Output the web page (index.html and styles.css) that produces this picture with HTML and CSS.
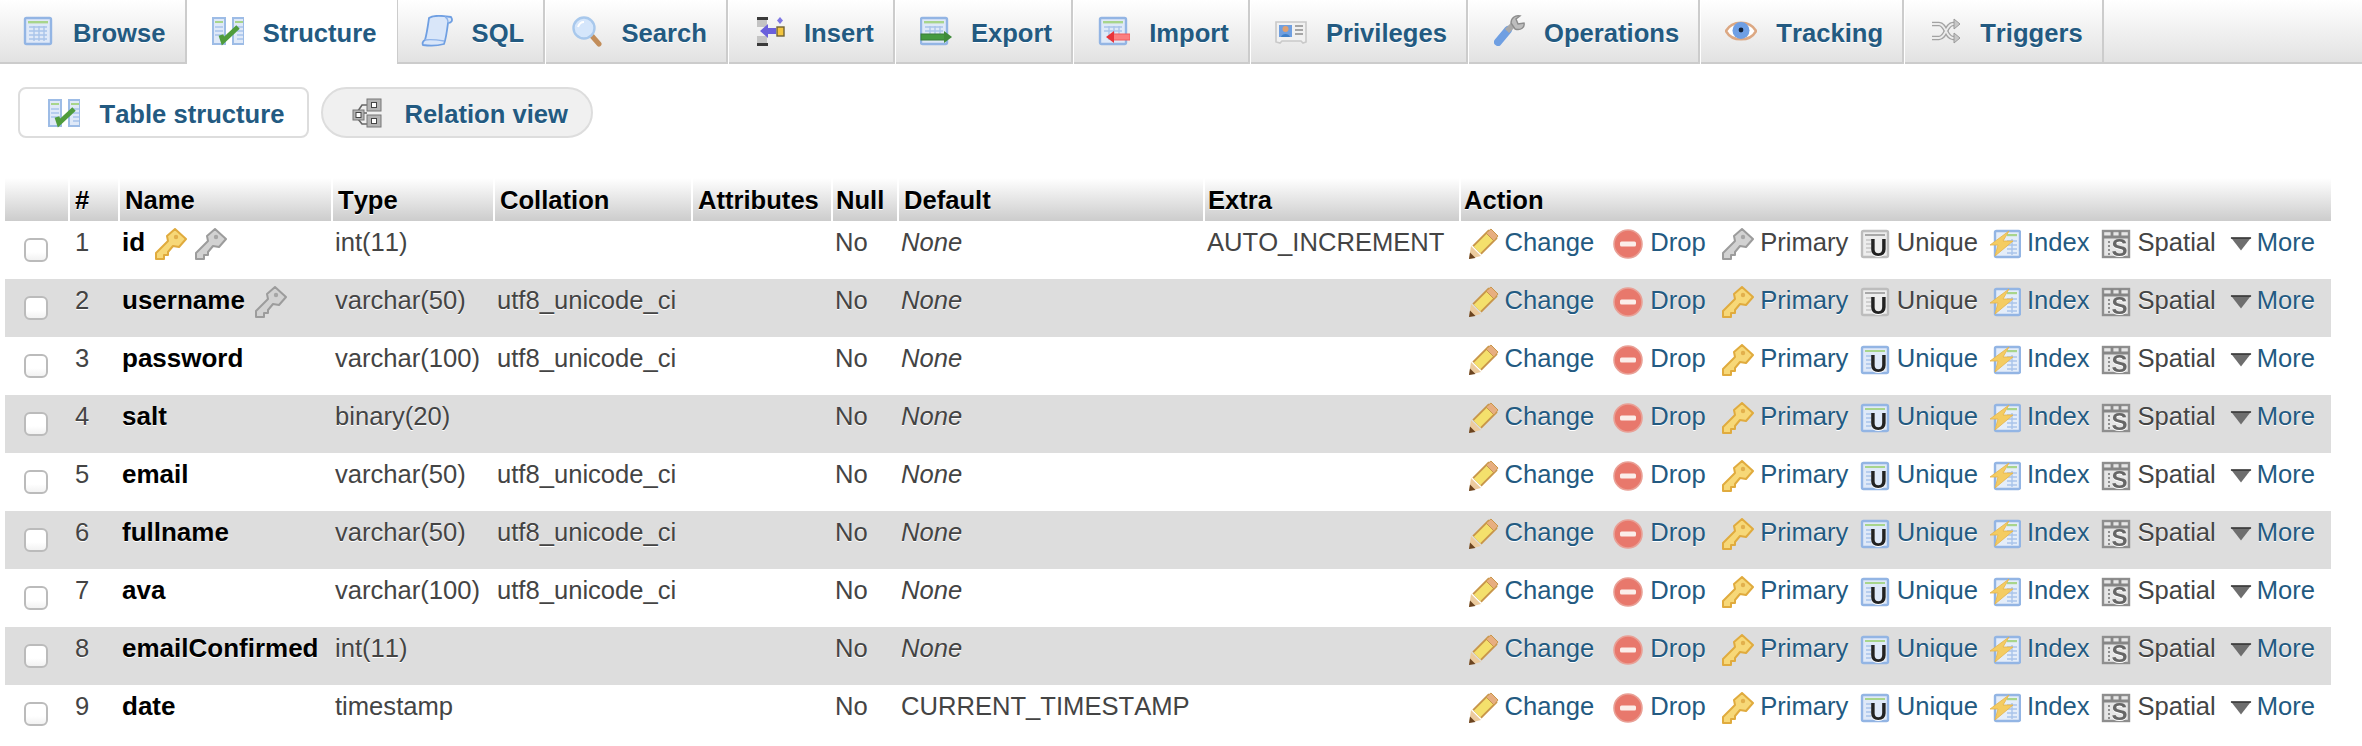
FILE: index.html
```html
<!DOCTYPE html>
<html lang="en">
<head>
    <meta charset="UTF-8">
    <title>phpMyAdmin - Table structure</title>
    <link rel="stylesheet" href="styles.css">
</head>
<body>
    <!-- icon sprite -->
    <svg class="sprite" xmlns="http://www.w3.org/2000/svg">
        <symbol id="i-browse" viewBox="0 0 32 32">
            <rect x="3" y="3" width="26" height="26" rx="1.5" fill="#dfe9f8" stroke="#93b5e4" stroke-width="2.4"/>
            <rect x="6" y="6" width="20" height="2.4" fill="#a8d58c"/>
            <path d="M7 12h18M7 16h18M7 20h18M7 24h18M12 11v15M17 11v15M22 11v15" stroke="#a9c4ea" stroke-width="1.4" fill="none"/>
        </symbol>
        <symbol id="i-structure" viewBox="0 0 32 32">
            <rect x="1" y="3" width="12" height="26" fill="#dfe9f8" stroke="#9dbce6" stroke-width="2"/>
            <rect x="21" y="3" width="11" height="26" fill="#dfe9f8" stroke="#9dbce6" stroke-width="2"/>
            <path d="M3 7h8M23 7h8" stroke="#a8d58c" stroke-width="2"/>
            <path d="M3 12h8M3 16h8M3 20h8M25 12h6M25 16h6M25 20h6M25 24h6" stroke="#a9c4ea" stroke-width="1.4"/>
            <path d="M9 20l2 6L26 12" stroke="#4f9c3c" stroke-width="5" fill="none"/>
        </symbol>
        <symbol id="i-sql" viewBox="0 0 32 32">
            <path d="M8 3C12 0 24 1 30 2C32 5 31 8 27 8C26 16 25 24 23 29C16 31 8 31 2 30C1 28 2 26 4 25C6 18 7 10 8 3Z" fill="#d9e6f9" stroke="#6f9fe2" stroke-width="1.8"/>
            <path d="M24 2c3 1 3 5 3 6M4 25c5-1 13 0 19 1" stroke="#8fb4ea" stroke-width="1.4" fill="none"/>
        </symbol>
        <symbol id="i-search" viewBox="0 0 32 32">
            <path d="M22 21l7 8" stroke="#c28d5a" stroke-width="5" stroke-linecap="round"/>
            <circle cx="14" cy="13" r="10.5" fill="#d5e6fb" stroke="#a8c8ec" stroke-width="2.4"/>
            <path d="M8 12c1-3 3-5 6-5" stroke="#fff" stroke-width="2" fill="none"/>
        </symbol>
        <symbol id="i-insert" viewBox="0 0 32 32">
            <rect x="4" y="5" width="10" height="7" fill="#c4c4c4"/>
            <rect x="4" y="21" width="10" height="7" fill="#c4c4c4"/>
            <rect x="4" y="2" width="11" height="3" fill="#3a3a3a"/>
            <rect x="4" y="28" width="11" height="3" fill="#3a3a3a"/>
            <polygon points="7,16 15,9 15,13 23,13 23,19 15,19 15,23" fill="#6a60dc"/>
            <rect x="24" y="12" width="7" height="9" fill="#f3c53e" stroke="#6f6236" stroke-width="1.4"/>
            <polygon points="27,2 30,5.500 27,9 24,5.500" fill="#7f78e4"/>
        </symbol>
        <symbol id="i-export" viewBox="0 0 32 32">
            <rect x="1" y="3" width="26" height="26" rx="1.5" fill="#dfe9f8" stroke="#93b5e4" stroke-width="2.4"/>
            <rect x="4" y="6" width="20" height="2.4" fill="#a8d58c"/>
            <path d="M5 12h18M5 16h18M10 11v14M15 11v14M20 11v14" stroke="#a9c4ea" stroke-width="1.4"/>
            <rect x="1" y="19" width="24" height="6" fill="#459a40" stroke="#3a7d38"/>
            <polygon points="24,16 32,22 24,28" fill="#3f8b3a"/>
        </symbol>
        <symbol id="i-import" viewBox="0 0 32 32">
            <rect x="2" y="3" width="26" height="26" rx="1.5" fill="#dfe9f8" stroke="#93b5e4" stroke-width="2.4"/>
            <rect x="5" y="6" width="20" height="2.4" fill="#a8d58c"/>
            <path d="M6 12h18M6 16h18M11 11v14M16 11v14M21 11v14" stroke="#a9c4ea" stroke-width="1.4"/>
            <rect x="15" y="19" width="17" height="6" fill="#fb7f80" stroke="#f45c5c"/>
            <polygon points="8,22 16,16 16,28" fill="#e8333a"/>
        </symbol>
        <symbol id="i-privileges" viewBox="0 0 32 32">
            <path d="M1 7h30v20l-3 1-2-2H7l-2 2-4-1Z" fill="#f1f1f1" stroke="#c9c9c9" stroke-width="1.6"/>
            <rect x="4" y="10" width="13" height="12" fill="#6f9fe0"/>
            <circle cx="10.500" cy="14" r="3" fill="#e0a070"/>
            <path d="M6 22c1-4 8-4 9 0Z" fill="#3f7fc8"/>
            <path d="M20 11h8M20 15h8M20 19h8" stroke="#a6a6a6" stroke-width="2"/>
        </symbol>
        <symbol id="i-operations" viewBox="0 0 32 32">
            <path d="M5 27L15 15" stroke="#6f9fe2" stroke-width="8" stroke-linecap="round"/>
            <path d="M14 16l6-6" stroke="#a8a8a8" stroke-width="6"/>
            <path d="M18 8C18 3 22 0 27 1L23 4L25 9L31 8C32 12 28 16 22 14Z" fill="#bdbdbd" stroke="#8c8c8c" stroke-width="1.400"/>
        </symbol>
        <symbol id="i-tracking" viewBox="0 0 32 32">
            <path d="M1 16C7 5 25 5 31 16C25 27 7 27 1 16Z" fill="#fff" stroke="#dca883" stroke-width="2.6"/>
            <circle cx="16" cy="15.500" r="8.500" fill="#6f9fe4"/>
            <circle cx="16" cy="15" r="2.400" fill="#12233c"/>
        </symbol>
        <symbol id="i-triggers" viewBox="0 0 32 32">
            <g fill="none" stroke="#a2a2a2" stroke-width="4.400">
                <path d="M3 9h7c7 0 7 14 14 14h3"/>
                <path d="M3 23h7c7 0 7-14 14-14h3"/>
            </g>
            <g fill="none" stroke="#ececec" stroke-width="1.800">
                <path d="M3 9h7c7 0 7 14 14 14h3"/>
                <path d="M3 23h7c7 0 7-14 14-14h3"/>
            </g>
            <polygon points="25,4 31,9 25,14" fill="#c8c8c8" stroke="#9a9a9a"/>
            <polygon points="25,18 31,23 25,28" fill="#c8c8c8" stroke="#9a9a9a"/>
        </symbol>
        <symbol id="i-relation" viewBox="0 0 32 32">
            <path d="M16 8H11L7 14M7 22L11 27H16M12 16h4" stroke="#666" stroke-width="1.600" fill="none"/>
            <rect x="16" y="2" width="14" height="12" fill="#b4b4b4" stroke="#777"/>
            <rect x="20.500" y="5.500" width="5" height="5" fill="#fff" stroke="#444"/>
            <rect x="2" y="13" width="11" height="10" fill="#b4b4b4" stroke="#777"/>
            <rect x="5" y="15.500" width="5" height="5" fill="#fff" stroke="#444"/>
            <rect x="16" y="18" width="14" height="12" fill="#b4b4b4" stroke="#777"/>
            <rect x="20.500" y="21.500" width="5" height="5" fill="#fff" stroke="#444"/>
        </symbol>
        <symbol id="i-key" viewBox="0 0 32 32">
            <path d="M20 1L31 11L24 19L18 18L13 24V27H9V31H1V25L13 13L12 8Z" fill="#f7d878" stroke="#e0ab3e" stroke-width="2" stroke-linejoin="round"/>
            <circle cx="21" cy="9" r="2.200" fill="#e2b04c"/>
        </symbol>
        <symbol id="i-key-off" viewBox="0 0 32 32">
            <path d="M20 1L31 11L24 19L18 18L13 24V27H9V31H1V25L13 13L12 8Z" fill="#d2d2d2" stroke="#9c9c9c" stroke-width="2" stroke-linejoin="round"/>
            <circle cx="21" cy="9" r="2.200" fill="#a6a6a6"/>
        </symbol>
        <symbol id="i-change" viewBox="0 0 32 32">
            <path d="M10 22L26 6" stroke="#c8964a" stroke-width="13"/>
            <path d="M10 22L26 6" stroke="#f4e06c" stroke-width="9"/>
            <path d="M24 1L31 8L27 13L19 5Z" fill="#e7ae80" stroke="#c8964a"/>
            <polygon points="2,31 4,18 14,28" fill="#eccb9e"/>
            <polygon points="2,31 3,24.500 8.500,30" fill="#6b4420"/>
        </symbol>
        <symbol id="i-drop" viewBox="0 0 32 32">
            <circle cx="16" cy="16" r="14" fill="#e8786c" stroke="#e9a096" stroke-width="1.600"/>
            <rect x="8" y="13.500" width="16" height="5" rx="1.500" fill="#fbeeea"/>
        </symbol>
        <symbol id="i-unique" viewBox="0 0 32 32">
            <rect x="3" y="3" width="26" height="26" rx="1.500" fill="#dfe9f8" stroke="#93b5e4" stroke-width="2.400"/>
            <rect x="6" y="6" width="20" height="2" fill="#a8d58c"/>
            <path d="M7 12h7M7 16h7M7 20h7M7 24h7" stroke="#a9c4ea" stroke-width="1.400"/>
            <text x="19.500" y="27.500" class="ico-letter">U</text>
        </symbol>
        <symbol id="i-unique-off" viewBox="0 0 32 32">
            <rect x="3" y="3" width="26" height="26" rx="1.500" fill="#ededed" stroke="#bdbdbd" stroke-width="2.400"/>
            <rect x="6" y="6" width="20" height="2" fill="#a8a8a8"/>
            <path d="M7 12h7M7 16h7M7 20h7M7 24h7" stroke="#c6c6c6" stroke-width="1.400"/>
            <text x="19.500" y="27.500" class="ico-letter">U</text>
        </symbol>
        <symbol id="i-index" viewBox="0 0 32 32">
            <rect x="6" y="3" width="25" height="26" rx="1.500" fill="#e4edf9" stroke="#93b5e4" stroke-width="2.400"/>
            <rect x="18" y="6" width="10" height="2.200" fill="#a8d58c"/>
            <path d="M18 13h10M18 17h10M18 21h10M18 25h10M23 11v16" stroke="#a9c4ea" stroke-width="1.400"/>
            <polygon points="20,3 1,17 9,17 6,28 24,13 14,13" fill="#f4cc62" stroke="#e6b449" stroke-width=".8"/>
        </symbol>
        <symbol id="i-spatial" viewBox="0 0 32 32">
            <rect x="3" y="3" width="26" height="26" fill="#e6e6e6" stroke="#8e8e8e" stroke-width="2.400"/>
            <path d="M3 9h26M12 3v6M20 3v6" stroke="#868686" stroke-width="2.800"/>
            <path d="M9 13v14" stroke="#8e8e8e" stroke-width="2" stroke-dasharray="2 2"/>
            <text x="19.500" y="27.500" class="ico-letter ico-letter-grey">S</text>
        </symbol>
        <symbol id="i-more" viewBox="0 0 24 32">
            <polygon points="1,9 23,9 12,23" fill="#6e6e6e"/>
            <path d="M1 9.500h22" stroke="#333" stroke-width="1.600"/>
        </symbol>
    </svg>

    <nav class="tabs">
        <a class="tab" href="#"><svg class="icon"><use href="#i-browse"/></svg><span>Browse</span></a>
        <a class="tab active" href="#"><svg class="icon"><use href="#i-structure"/></svg><span>Structure</span></a>
        <a class="tab" href="#"><svg class="icon"><use href="#i-sql"/></svg><span>SQL</span></a>
        <a class="tab" href="#"><svg class="icon"><use href="#i-search"/></svg><span>Search</span></a>
        <a class="tab" href="#"><svg class="icon"><use href="#i-insert"/></svg><span>Insert</span></a>
        <a class="tab" href="#"><svg class="icon"><use href="#i-export"/></svg><span>Export</span></a>
        <a class="tab" href="#"><svg class="icon"><use href="#i-import"/></svg><span>Import</span></a>
        <a class="tab" href="#"><svg class="icon"><use href="#i-privileges"/></svg><span>Privileges</span></a>
        <a class="tab" href="#"><svg class="icon"><use href="#i-operations"/></svg><span>Operations</span></a>
        <a class="tab" href="#"><svg class="icon"><use href="#i-tracking"/></svg><span>Tracking</span></a>
        <a class="tab" href="#"><svg class="icon"><use href="#i-triggers"/></svg><span>Triggers</span></a>
    </nav>

    <div class="subtabs">
        <a class="subtab current" href="#"><svg class="icon"><use href="#i-structure"/></svg><span>Table structure</span></a>
        <a class="subtab pill" href="#"><svg class="icon"><use href="#i-relation"/></svg><span>Relation view</span></a>
    </div>

    <table class="fields">
        <colgroup>
            <col class="c-check"><col class="c-num"><col class="c-name"><col class="c-type"><col class="c-coll">
            <col class="c-attr"><col class="c-null"><col class="c-default"><col class="c-extra"><col class="c-action">
        </colgroup>
        <thead>
            <tr>
                <th></th><th>#</th><th>Name</th><th>Type</th><th>Collation</th><th>Attributes</th><th class="tight">Null</th><th>Default</th><th class="tight">Extra</th><th class="tight">Action</th>
            </tr>
        </thead>
        <tbody>
            <tr>
                <td><input class="check" type="checkbox"></td>
                <td class="num">1</td>
                <td><div class="name"><b>id</b><svg class="icon"><use href="#i-key"/></svg><svg class="icon"><use href="#i-key-off"/></svg></div></td>
                <td>int(11)</td><td></td><td></td><td>No</td><td><i>None</i></td><td>AUTO_INCREMENT</td>
                <td><div class="actions">
                    <a class="act change" href="#"><svg class="icon"><use href="#i-change"/></svg>Change</a>
                    <a class="act drop" href="#"><svg class="icon"><use href="#i-drop"/></svg>Drop</a>
                    <span class="act primary"><svg class="icon"><use href="#i-key-off"/></svg>Primary</span>
                    <span class="act unique"><svg class="icon"><use href="#i-unique-off"/></svg>Unique</span>
                    <a class="act index" href="#"><svg class="icon"><use href="#i-index"/></svg>Index</a>
                    <span class="act spatial"><svg class="icon"><use href="#i-spatial"/></svg>Spatial</span>
                    <a class="act more" href="#"><svg class="icon tri"><use href="#i-more"/></svg>More</a>
                </div></td>
            </tr>
            <tr>
                <td><input class="check" type="checkbox"></td>
                <td class="num">2</td>
                <td><div class="name"><b>username</b><svg class="icon"><use href="#i-key-off"/></svg></div></td>
                <td>varchar(50)</td><td>utf8_unicode_ci</td><td></td><td>No</td><td><i>None</i></td><td></td>
                <td><div class="actions">
                    <a class="act change" href="#"><svg class="icon"><use href="#i-change"/></svg>Change</a>
                    <a class="act drop" href="#"><svg class="icon"><use href="#i-drop"/></svg>Drop</a>
                    <a class="act primary" href="#"><svg class="icon"><use href="#i-key"/></svg>Primary</a>
                    <span class="act unique"><svg class="icon"><use href="#i-unique-off"/></svg>Unique</span>
                    <a class="act index" href="#"><svg class="icon"><use href="#i-index"/></svg>Index</a>
                    <span class="act spatial"><svg class="icon"><use href="#i-spatial"/></svg>Spatial</span>
                    <a class="act more" href="#"><svg class="icon tri"><use href="#i-more"/></svg>More</a>
                </div></td>
            </tr>
            <tr>
                <td><input class="check" type="checkbox"></td>
                <td class="num">3</td>
                <td><div class="name"><b>password</b></div></td>
                <td>varchar(100)</td><td>utf8_unicode_ci</td><td></td><td>No</td><td><i>None</i></td><td></td>
                <td><div class="actions">
                    <a class="act change" href="#"><svg class="icon"><use href="#i-change"/></svg>Change</a>
                    <a class="act drop" href="#"><svg class="icon"><use href="#i-drop"/></svg>Drop</a>
                    <a class="act primary" href="#"><svg class="icon"><use href="#i-key"/></svg>Primary</a>
                    <a class="act unique" href="#"><svg class="icon"><use href="#i-unique"/></svg>Unique</a>
                    <a class="act index" href="#"><svg class="icon"><use href="#i-index"/></svg>Index</a>
                    <span class="act spatial"><svg class="icon"><use href="#i-spatial"/></svg>Spatial</span>
                    <a class="act more" href="#"><svg class="icon tri"><use href="#i-more"/></svg>More</a>
                </div></td>
            </tr>
            <tr>
                <td><input class="check" type="checkbox"></td>
                <td class="num">4</td>
                <td><div class="name"><b>salt</b></div></td>
                <td>binary(20)</td><td></td><td></td><td>No</td><td><i>None</i></td><td></td>
                <td><div class="actions">
                    <a class="act change" href="#"><svg class="icon"><use href="#i-change"/></svg>Change</a>
                    <a class="act drop" href="#"><svg class="icon"><use href="#i-drop"/></svg>Drop</a>
                    <a class="act primary" href="#"><svg class="icon"><use href="#i-key"/></svg>Primary</a>
                    <a class="act unique" href="#"><svg class="icon"><use href="#i-unique"/></svg>Unique</a>
                    <a class="act index" href="#"><svg class="icon"><use href="#i-index"/></svg>Index</a>
                    <span class="act spatial"><svg class="icon"><use href="#i-spatial"/></svg>Spatial</span>
                    <a class="act more" href="#"><svg class="icon tri"><use href="#i-more"/></svg>More</a>
                </div></td>
            </tr>
            <tr>
                <td><input class="check" type="checkbox"></td>
                <td class="num">5</td>
                <td><div class="name"><b>email</b></div></td>
                <td>varchar(50)</td><td>utf8_unicode_ci</td><td></td><td>No</td><td><i>None</i></td><td></td>
                <td><div class="actions">
                    <a class="act change" href="#"><svg class="icon"><use href="#i-change"/></svg>Change</a>
                    <a class="act drop" href="#"><svg class="icon"><use href="#i-drop"/></svg>Drop</a>
                    <a class="act primary" href="#"><svg class="icon"><use href="#i-key"/></svg>Primary</a>
                    <a class="act unique" href="#"><svg class="icon"><use href="#i-unique"/></svg>Unique</a>
                    <a class="act index" href="#"><svg class="icon"><use href="#i-index"/></svg>Index</a>
                    <span class="act spatial"><svg class="icon"><use href="#i-spatial"/></svg>Spatial</span>
                    <a class="act more" href="#"><svg class="icon tri"><use href="#i-more"/></svg>More</a>
                </div></td>
            </tr>
            <tr>
                <td><input class="check" type="checkbox"></td>
                <td class="num">6</td>
                <td><div class="name"><b>fullname</b></div></td>
                <td>varchar(50)</td><td>utf8_unicode_ci</td><td></td><td>No</td><td><i>None</i></td><td></td>
                <td><div class="actions">
                    <a class="act change" href="#"><svg class="icon"><use href="#i-change"/></svg>Change</a>
                    <a class="act drop" href="#"><svg class="icon"><use href="#i-drop"/></svg>Drop</a>
                    <a class="act primary" href="#"><svg class="icon"><use href="#i-key"/></svg>Primary</a>
                    <a class="act unique" href="#"><svg class="icon"><use href="#i-unique"/></svg>Unique</a>
                    <a class="act index" href="#"><svg class="icon"><use href="#i-index"/></svg>Index</a>
                    <span class="act spatial"><svg class="icon"><use href="#i-spatial"/></svg>Spatial</span>
                    <a class="act more" href="#"><svg class="icon tri"><use href="#i-more"/></svg>More</a>
                </div></td>
            </tr>
            <tr>
                <td><input class="check" type="checkbox"></td>
                <td class="num">7</td>
                <td><div class="name"><b>ava</b></div></td>
                <td>varchar(100)</td><td>utf8_unicode_ci</td><td></td><td>No</td><td><i>None</i></td><td></td>
                <td><div class="actions">
                    <a class="act change" href="#"><svg class="icon"><use href="#i-change"/></svg>Change</a>
                    <a class="act drop" href="#"><svg class="icon"><use href="#i-drop"/></svg>Drop</a>
                    <a class="act primary" href="#"><svg class="icon"><use href="#i-key"/></svg>Primary</a>
                    <a class="act unique" href="#"><svg class="icon"><use href="#i-unique"/></svg>Unique</a>
                    <a class="act index" href="#"><svg class="icon"><use href="#i-index"/></svg>Index</a>
                    <span class="act spatial"><svg class="icon"><use href="#i-spatial"/></svg>Spatial</span>
                    <a class="act more" href="#"><svg class="icon tri"><use href="#i-more"/></svg>More</a>
                </div></td>
            </tr>
            <tr>
                <td><input class="check" type="checkbox"></td>
                <td class="num">8</td>
                <td><div class="name"><b>emailConfirmed</b></div></td>
                <td>int(11)</td><td></td><td></td><td>No</td><td><i>None</i></td><td></td>
                <td><div class="actions">
                    <a class="act change" href="#"><svg class="icon"><use href="#i-change"/></svg>Change</a>
                    <a class="act drop" href="#"><svg class="icon"><use href="#i-drop"/></svg>Drop</a>
                    <a class="act primary" href="#"><svg class="icon"><use href="#i-key"/></svg>Primary</a>
                    <a class="act unique" href="#"><svg class="icon"><use href="#i-unique"/></svg>Unique</a>
                    <a class="act index" href="#"><svg class="icon"><use href="#i-index"/></svg>Index</a>
                    <span class="act spatial"><svg class="icon"><use href="#i-spatial"/></svg>Spatial</span>
                    <a class="act more" href="#"><svg class="icon tri"><use href="#i-more"/></svg>More</a>
                </div></td>
            </tr>
            <tr>
                <td><input class="check" type="checkbox"></td>
                <td class="num">9</td>
                <td><div class="name"><b>date</b></div></td>
                <td>timestamp</td><td></td><td></td><td>No</td><td>CURRENT_TIMESTAMP</td><td></td>
                <td><div class="actions">
                    <a class="act change" href="#"><svg class="icon"><use href="#i-change"/></svg>Change</a>
                    <a class="act drop" href="#"><svg class="icon"><use href="#i-drop"/></svg>Drop</a>
                    <a class="act primary" href="#"><svg class="icon"><use href="#i-key"/></svg>Primary</a>
                    <a class="act unique" href="#"><svg class="icon"><use href="#i-unique"/></svg>Unique</a>
                    <a class="act index" href="#"><svg class="icon"><use href="#i-index"/></svg>Index</a>
                    <span class="act spatial"><svg class="icon"><use href="#i-spatial"/></svg>Spatial</span>
                    <a class="act more" href="#"><svg class="icon tri"><use href="#i-more"/></svg>More</a>
                </div></td>
            </tr>
        </tbody>
    </table>
</body>
</html>
```

FILE: styles.css
```css
body {
    margin: 0;
    background-color: #fff;
    color: #444;
    font-family: "Liberation Sans", Arial, sans-serif;
    font-size: 25.6px;
    font-kerning: none;
    line-height: 30px;
    overflow: hidden;
}
a {
    color: #235a81;
    text-decoration: none;
}
.sprite {
    display: none;
}
.icon {
    display: block;
    flex: none;
    width: 32px;
    height: 32px;
    filter: blur(0.4px);
}
.ico-letter {
    font-family: "Liberation Sans", sans-serif;
    font-size: 24px;
    font-weight: bold;
    text-anchor: middle;
    fill: #222;
}
.ico-letter-grey {
    fill: #666;
}

/* top tabs */
.tabs {
    display: flex;
    height: 62px;
    background: linear-gradient(#fff, #e2e2e2);
    border-bottom: 2px solid #ccc;
}
.tab {
    display: flex;
    gap: 19px;
    margin-bottom: -2px;
    padding: 15px 19.2px 0 24px;
    border-right: 2px solid #ccc;
    border-left: 1px solid #fff;
    font-weight: bold;
    text-shadow: 0 1px 0 #fff;
    white-space: nowrap;
}
.tab:first-child {
    margin-left: -3px;
}
.tab span {
    margin-top: 3px;
}
.tab.active {
    margin-right: -2px;
    background: #fff;
}

/* sub tabs */
.subtabs {
    display: flex;
    gap: 12px;
    margin: 23px 0 40px 18px;
}
.subtab {
    display: flex;
    gap: 19.5px;
    box-sizing: border-box;
    height: 51px;
    padding: 8px 23px 0 28px;
    border: 2px solid #ddd;
    border-radius: 8px;
    font-weight: bold;
    text-shadow: 0 1px 0 #fff;
}
.subtab span {
    margin-top: 2px;
}
.subtab.pill {
    gap: 21px;
    border-radius: 26px;
    background-color: #f0f0f0;
}

/* field table */
.fields {
    width: 2326px;
    margin-left: 5px;
    border-collapse: separate;
    border-spacing: 0;
    table-layout: fixed;
}
.c-check { width: 63px; }
.c-num { width: 50px; }
.c-name { width: 213px; }
.c-type { width: 162px; }
.c-coll { width: 198px; }
.c-attr { width: 140px; }
.c-null { width: 66px; }
.c-default { width: 306px; }
.c-extra { width: 256px; }
.fields th {
    height: 30px;
    padding: 7px 0 6px 5px;
    border-left: 2px solid #fff;
    background: linear-gradient(#fff, #ccc);
    color: #000;
    font-weight: bold;
    text-align: left;
    text-shadow: 0 1px 0 #fff;
    white-space: nowrap;
}
.fields th.tight {
    padding-left: 3px;
}
.fields th:first-child {
    border-left: 0;
}
.fields td {
    height: 30px;
    padding: 6px 0 17px 4px;
    text-shadow: 0 1px 0 #fff;
    vertical-align: top;
    white-space: nowrap;
}
.fields tbody tr:nth-child(even) td {
    background-color: #ddd;
}
.fields td.num {
    padding-left: 7px;
}
.fields td:first-child {
    padding-left: 19px;
}
.fields td:last-child {
    padding-left: 7.5px;
}
.check {
    display: block;
    appearance: none;
    box-sizing: border-box;
    width: 24px;
    height: 24px;
    margin: 11px 0 0;
    border: 2px solid #bbb;
    border-radius: 6px;
    background: linear-gradient(#fff 60%, #f2f2f2);
}
.name {
    display: flex;
    gap: 8px;
    color: #000;
}
.name b {
    margin-right: 2px;
    font-size: 26px;
}
.name .icon,
.act .icon {
    margin-top: 1px;
}

/* action links */
.actions {
    display: flex;
}
.act {
    display: flex;
    gap: 6px;
}
.drop { margin-left: 18px; }
.primary { margin-left: 16.5px; }
.unique { margin-left: 10.5px; }
.index { margin-left: 11px; }
.spatial { margin-left: 10px; }
.more { margin-left: 14px; gap: 5px; }
.act .tri {
    width: 22px;
}
```
